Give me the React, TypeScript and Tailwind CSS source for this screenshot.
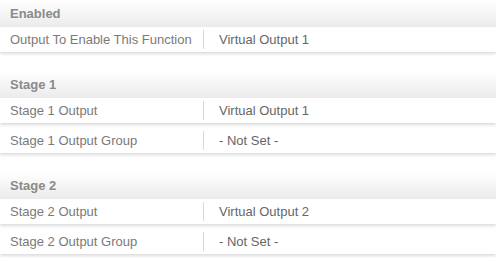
import React from "react";

type Row = { label: string; value: string };
type Section = { title: string; rows: Row[] };

const sections: Section[] = [
  { title: "Enabled", rows: [{ label: "Output To Enable This Function", value: "Virtual Output 1" }] },
  {
    title: "Stage 1",
    rows: [
      { label: "Stage 1 Output", value: "Virtual Output 1" },
      { label: "Stage 1 Output Group", value: "- Not Set -" },
    ],
  },
  {
    title: "Stage 2",
    rows: [
      { label: "Stage 2 Output", value: "Virtual Output 2" },
      { label: "Stage 2 Output Group", value: "- Not Set -" },
    ],
  },
];

export default function App() {
  return (
    <div
      className="w-[496px] h-[258px] bg-white overflow-hidden flex flex-col gap-[14px]"
      style={{ fontFamily: '"Liberation Sans", Arial, sans-serif' }}
    >
      {sections.map((s) => (
        <div key={s.title} className="flex flex-col">
          <div className="h-[27px] flex items-center pl-[10px] bg-gradient-to-b from-white to-[#ebebeb] text-[13px] font-bold text-[#8a8a8a]">
            {s.title}
          </div>
          {s.rows.map((r) => (
            <div
              key={r.label}
              className="h-[25px] mb-[5px] flex items-center bg-white shadow-[0_2px_3px_rgba(0,0,0,0.14)] text-[13px]"
            >
              <div className="w-[204px] pl-[10px] text-[#7a7a7a] border-r border-[#d8d8d8] h-[19px] flex items-center">
                {r.label}
              </div>
              <div className="pl-[15px] text-[#666]">{r.value}</div>
            </div>
          ))}
        </div>
      ))}
    </div>
  );
}
